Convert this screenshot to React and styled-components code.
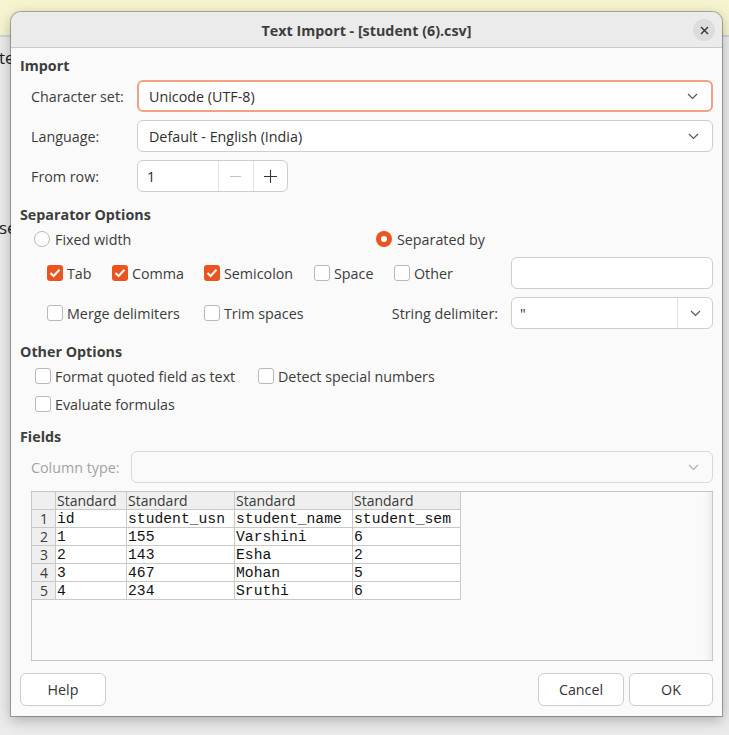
import React from "react";
import styled, { createGlobalStyle } from "styled-components";

const GlobalStyle = createGlobalStyle`
  html, body { margin: 0; padding: 0; }
  body {
    background: #ebebeb;
    font-family: "Open Sans", "Liberation Sans", Arial, sans-serif;
    -webkit-font-smoothing: antialiased;
  }
  * { box-sizing: border-box; }
`;

const Desktop = styled.div`
  position: relative;
  width: 729px;
  height: 735px;
  overflow: hidden;
  background: #ebebeb;
`;

const TopStrip = styled.div`
  height: 37px;
  background: #f6f3cf;
  border-bottom: 2px solid #d4d4d4;
`;

const BehindText = styled.div`
  margin-top: ${p => p.$top}px;
  margin-left: ${p => p.$left}px;
  font-size: 17px;
  line-height: 20px;
  color: #222;
`;

const Window = styled.div`
  position: absolute;
  left: 11px;
  top: 12px;
  width: 711px;
  height: 704px;
  display: flex;
  flex-direction: column;
  background: #fafafa;
  border-radius: 10px 10px 0 0;
  box-shadow: 0 0 0 1px rgba(0, 0, 0, 0.28), 0 4px 14px rgba(0, 0, 0, 0.28);
  color: #3c3c3c;
  font-size: 14.3px;
`;

const TitleBar = styled.div`
  position: relative;
  flex: none;
  height: 36px;
  display: flex;
  align-items: center;
  justify-content: center;
  padding-top: 1px;
  background: #ebebeb;
  border-bottom: 1px solid #c9c9c9;
  border-radius: 10px 10px 0 0;
  font-weight: bold;
  font-size: 14.3px;
  color: #3d3d3d;
`;

const CloseButton = styled.button`
  position: absolute;
  right: 7px;
  top: 7px;
  width: 22px;
  height: 22px;
  padding: 0;
  border: none;
  border-radius: 50%;
  background: #dcdcdc;
  display: flex;
  align-items: center;
  justify-content: center;
`;

const Body = styled.div`
  flex: 1;
  display: flex;
  flex-direction: column;
  padding: 8px 9px 10px;
`;

const SectionTitle = styled.div`
  margin-top: ${p => p.$gap || 0}px;
  font-weight: bold;
  line-height: 20px;
  color: #3d3d3d;
`;

const FormGrid = styled.div`
  margin-top: 4px;
  padding-left: 11px;
  display: grid;
  grid-template-columns: ${p => p.$label}px 1fr;
  grid-auto-rows: 32px;
  row-gap: 8px;
  align-items: center;
`;

const Label = styled.div`
  color: ${p => (p.$disabled ? "#a3a3a3" : "#3c3c3c")};
  white-space: nowrap;
`;

const Select = styled.div`
  height: 32px;
  display: flex;
  align-items: center;
  justify-content: space-between;
  padding: 0 13px 0 ${p => (p.$focused ? 10 : 11)}px;
  background: ${p => (p.$disabled ? "#fafafa" : "#fff")};
  border: ${p => (p.$focused ? "2px solid #f0a283" : `1px solid ${p.$disabled ? "#d9d9d9" : "#cdcdcd"}`)};
  border-radius: 6px;
  color: #2e2e2e;
`;

const Spin = styled.div`
  width: 151px;
  height: 32px;
  display: flex;
  background: #fff;
  border: 1px solid #cdcdcd;
  border-radius: 6px;
`;

const SpinValue = styled.div`
  width: 80px;
  display: flex;
  align-items: center;
  padding-left: 9px;
  color: #2e2e2e;
`;

const SpinButton = styled.div`
  flex: 1;
  display: flex;
  align-items: center;
  justify-content: center;
  border-left: 1px solid #e2e2e2;
`;

const RadioRow = styled.div`
  margin-top: 4px;
  padding-left: 14px;
  height: 20px;
  display: grid;
  grid-template-columns: 342px 1fr;
  align-items: center;
`;

const Option = styled.label`
  display: flex;
  align-items: center;
  gap: ${p => p.$gap || 4}px;
  white-space: nowrap;
  color: #3c3c3c;
  grid-column: ${p => p.$span || "auto"};
`;

const RadioDot = styled.span`
  width: 16px;
  height: 16px;
  flex: none;
  border-radius: 50%;
  background: ${p => (p.$on ? "#e95420" : "#fff")};
  border: ${p => (p.$on ? "none" : "1px solid #b9b9b9")};
  display: flex;
  align-items: center;
  justify-content: center;
  &::after {
    content: "";
    display: ${p => (p.$on ? "block" : "none")};
    width: 6px;
    height: 6px;
    border-radius: 50%;
    background: #fff;
  }
`;

const Box = styled.span`
  width: 16px;
  height: 16px;
  flex: none;
  border-radius: 3px;
  background: ${p => (p.$on ? "#e95420" : "#fff")};
  border: ${p => (p.$on ? "none" : "1px solid #b9b9b9")};
  display: flex;
  align-items: center;
  justify-content: center;
`;

const SeparatorGrid = styled.div`
  margin-top: 8px;
  padding-left: 27px;
  display: grid;
  grid-template-columns: 65px 92px 110px 80px 117px 1fr;
  grid-auto-rows: 32px;
  row-gap: 8px;
  align-items: center;
`;

const TextField = styled.div`
  height: 32px;
  background: #fff;
  border: 1px solid #cdcdcd;
  border-radius: 6px;
`;

const RightLabel = styled(Label)`
  grid-column: 4 / 6;
  justify-self: end;
  padding-right: 13px;
`;

const Combo = styled.div`
  height: 32px;
  display: flex;
  background: #fff;
  border: 1px solid #cdcdcd;
  border-radius: 6px;
`;

const ComboValue = styled.div`
  flex: 1;
  display: flex;
  align-items: center;
  padding-left: 8px;
  color: #2e2e2e;
`;

const ComboDrop = styled.div`
  width: 35px;
  display: flex;
  align-items: center;
  justify-content: center;
  border-left: 1px solid #e0e0e0;
`;

const OptionsGrid = styled.div`
  margin-top: 4px;
  padding-left: 15px;
  display: grid;
  grid-template-columns: 223px 1fr;
  grid-auto-rows: 20px;
  row-gap: 8px;
  align-items: center;
`;

const Preview = styled.div`
  margin: 8px 0 0 11px;
  height: 170px;
  background: #fafafa;
  border: 1px solid #c6c6c6;
  box-shadow: inset -10px 0 8px -8px rgba(0, 0, 0, 0.08);
  overflow: hidden;
`;

const DataGrid = styled.div`
  display: grid;
  grid-template-columns: 24px 71px 108px 118px 108px;
  grid-auto-rows: 18px;
  width: max-content;
`;

const Cell = styled.div`
  overflow: hidden;
  white-space: nowrap;
  border-right: 1px solid #c9c9c9;
  border-bottom: 1px solid #c9c9c9;
  padding-left: 1px;
  line-height: 18px;
  background: ${p => (p.$head ? "#efefef" : "#fff")};
  color: ${p => (p.$head ? "#3a3a3a" : "#111")};
  font-family: ${p => (p.$mono ? '"Liberation Mono", "DejaVu Sans Mono", monospace' : '"Open Sans", "Liberation Sans", Arial, sans-serif')};
  font-size: ${p => (p.$mono ? "14.7px" : "14px")};
  text-align: ${p => (p.$center ? "center" : "left")};
`;

const ButtonBar = styled.div`
  margin-top: auto;
  display: flex;
  gap: 5px;
`;

const Spacer = styled.div`
  flex: 1;
`;

const Button = styled.button`
  width: ${p => p.$w || 86}px;
  height: 33px;
  background: #fff;
  border: 1px solid #cdcdcd;
  border-radius: 6px;
  font-family: inherit;
  font-size: 14.3px;
  color: #333;
`;

const Chevron = ({ color = "#555" }) => (
  <svg width="11" height="7" viewBox="0 0 11 7">
    <polyline points="1,1 5.5,5.5 10,1" fill="none" stroke={color} strokeWidth="1.2" />
  </svg>
);

const Check = () => (
  <svg width="12" height="10" viewBox="0 0 12 10">
    <polyline points="1.5,5 4.6,8 10.5,1.8" fill="none" stroke="#fff" strokeWidth="2" />
  </svg>
);

const CheckOption = ({ on, children, span, gap }) => (
  <Option $span={span} $gap={gap}>
    <Box $on={on}>{on && <Check />}</Box>
    {children}
  </Option>
);

const rows = [
  ["id", "student_usn", "student_name", "student_sem"],
  ["1", "155", "Varshini", "6"],
  ["2", "143", "Esha", "2"],
  ["3", "467", "Mohan", "5"],
  ["4", "234", "Sruthi", "6"],
];

export default function App() {
  return (
    <Desktop>
      <GlobalStyle />
      <TopStrip />
      <BehindText $top={11} $left={-1}>te</BehindText>
      <BehindText $top={150} $left={-1}>se</BehindText>

      <Window>
        <TitleBar>
          Text Import - [student (6).csv]
          <CloseButton>
            <svg width="9" height="9" viewBox="0 0 9 9">
              <path d="M1 1 L8 8 M8 1 L1 8" stroke="#333" strokeWidth="1.4" />
            </svg>
          </CloseButton>
        </TitleBar>

        <Body>
          <SectionTitle>Import</SectionTitle>
          <FormGrid $label={106}>
            <Label>Character set:</Label>
            <Select $focused>
              Unicode (UTF-8)
              <Chevron />
            </Select>
            <Label>Language:</Label>
            <Select>
              Default - English (India)
              <Chevron />
            </Select>
            <Label>From row:</Label>
            <Spin>
              <SpinValue>1</SpinValue>
              <SpinButton>
                <svg width="11" height="11" viewBox="0 0 11 11">
                  <path d="M0 5.5 H11" stroke="#c4c4c4" strokeWidth="1" />
                </svg>
              </SpinButton>
              <SpinButton>
                <svg width="13" height="13" viewBox="0 0 13 13">
                  <path d="M0 6.5 H13 M6.5 0 V13" stroke="#333" strokeWidth="1.1" />
                </svg>
              </SpinButton>
            </Spin>
          </FormGrid>

          <SectionTitle $gap={13}>Separator Options</SectionTitle>
          <RadioRow>
            <Option $gap={5}>
              <RadioDot />
              Fixed width
            </Option>
            <Option $gap={5}>
              <RadioDot $on />
              Separated by
            </Option>
          </RadioRow>
          <SeparatorGrid>
            <CheckOption on>Tab</CheckOption>
            <CheckOption on>Comma</CheckOption>
            <CheckOption on>Semicolon</CheckOption>
            <CheckOption>Space</CheckOption>
            <CheckOption>Other</CheckOption>
            <TextField />
            <CheckOption span="1 / 3">Merge delimiters</CheckOption>
            <CheckOption span="3 / 4">Trim spaces</CheckOption>
            <RightLabel>String delimiter:</RightLabel>
            <Combo>
              <ComboValue>"</ComboValue>
              <ComboDrop>
                <Chevron />
              </ComboDrop>
            </Combo>
          </SeparatorGrid>

          <SectionTitle $gap={13}>Other Options</SectionTitle>
          <OptionsGrid>
            <CheckOption>Format quoted field as text</CheckOption>
            <CheckOption>Detect special numbers</CheckOption>
            <CheckOption>Evaluate formulas</CheckOption>
          </OptionsGrid>

          <SectionTitle $gap={13}>Fields</SectionTitle>
          <FormGrid $label={100}>
            <Label $disabled>Column type:</Label>
            <Select $disabled>
              <span />
              <Chevron color="#b0b0b0" />
            </Select>
          </FormGrid>

          <Preview>
            <DataGrid>
              <Cell $head />
              {[0, 1, 2, 3].map(i => (
                <Cell key={i} $head>Standard</Cell>
              ))}
              {rows.map((r, ri) => (
                <React.Fragment key={ri}>
                  <Cell $head $center>{ri + 1}</Cell>
                  {r.map((v, ci) => (
                    <Cell key={ci} $mono>{v}</Cell>
                  ))}
                </React.Fragment>
              ))}
            </DataGrid>
          </Preview>

          <ButtonBar>
            <Button>Help</Button>
            <Spacer />
            <Button>Cancel</Button>
            <Button $w={84}>OK</Button>
          </ButtonBar>
        </Body>
      </Window>
    </Desktop>
  );
}
